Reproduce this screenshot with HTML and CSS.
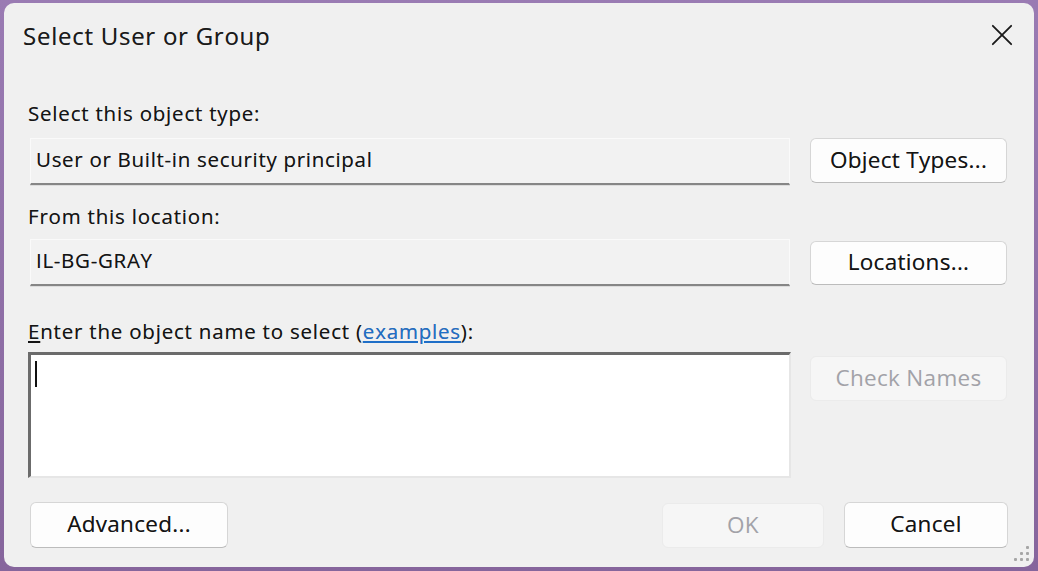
FILE: index.html
```html
<!DOCTYPE html>
<html lang="en">
<head>
<meta charset="utf-8">
<title>Select User or Group</title>
<link rel="stylesheet" href="styles.css">
</head>
<body>
<div class="window">
  <div class="titlebar">
    <span class="title">Select User or Group</span>
    <svg class="close" width="24" height="24" viewBox="0 0 24 24" aria-hidden="true">
      <path d="M2 2 L22 22 M22 2 L2 22" stroke="#1a1a1a" stroke-width="2" fill="none" stroke-linecap="round"/>
    </svg>
  </div>
  <div class="content">
    <div class="label label-first">Select this object type:</div>
    <div class="spacer"></div>
    <div class="field">User or Built-in security principal</div>
    <button class="btn">Object Types...</button>

    <div class="label label-second">From this location:</div>
    <div class="spacer"></div>
    <div class="field field-second">IL-BG-GRAY</div>
    <button class="btn btn-loc">Locations...</button>

    <div class="label label-third"><span class="ul">E</span>nter the object name to select (<a class="link" href="#">examples</a>):</div>
    <div class="spacer"></div>
    <div class="textarea"><span class="caret"></span></div>
    <button class="btn btn-disabled btn-check">Check Names</button>
  </div>
  <div class="footer">
    <button class="btn btn-adv">Advanced...</button>
    <div class="footer-right">
      <button class="btn btn-disabled btn-ok">OK</button>
      <button class="btn btn-cancel">Cancel</button>
    </div>
  </div>
  <div class="grip">
    <i class="d1"></i><i class="d2"></i><i class="d3"></i><i class="d4"></i><i class="d5"></i><i class="d6"></i>
  </div>
</div>
</body>
</html>
```

FILE: styles.css
```css
html, body {
  margin: 0;
  padding: 0;
  height: 100%;
}

body {
  background: linear-gradient(180deg, #9a7bb3 0%, #86659c 100%);
  font-family: "Open Sans", "Noto Sans", "Liberation Sans", sans-serif;
  color: #141414;
  overflow: hidden;
}

.window {
  position: relative;
  box-sizing: border-box;
  margin: 3px 4px 0 4px;
  height: 564px;
  background: #f0f0f0;
  border-radius: 10px;
  display: flex;
  flex-direction: column;
  text-shadow: 0 0 0.6px rgba(0, 0, 0, 0.45);
}

.titlebar {
  height: 70px;
  box-sizing: border-box;
  padding: 19px 20px 0 19px;
  display: flex;
  justify-content: space-between;
  align-items: flex-start;
}

.title {
  font-size: 24px;
  line-height: 28px;
  letter-spacing: 0.75px;
  color: #1a1a1a;
}

.close {
  margin-top: 2px;
  width: 24px;
  height: 22px;
}

.content {
  display: grid;
  grid-template-columns: 760px 197px;
  column-gap: 20px;
  padding: 0 27px 0 26px;
  align-items: start;
}

.label {
  font-size: 20.5px;
  line-height: 22px;
  letter-spacing: 0.8px;
  margin-left: -2px;
}

.label-first { margin-top: 29px; margin-bottom: 14px; }
.label-second { margin-top: 20px; margin-bottom: 12px; }
.label-third { margin-top: 34px; margin-bottom: 10px; }

.spacer { height: 0; }

.field {
  box-sizing: border-box;
  height: 47px;
  padding-left: 5px;
  font-size: 20.5px;
  line-height: 40px;
  letter-spacing: 0.7px;
  background: #f2f2f2;
  border: 1px solid #fafafa;
  border-bottom: 2px solid #868686;
  box-shadow: 0 1px 0 #dcdcdc;
  white-space: nowrap;
}

.btn {
  box-sizing: border-box;
  height: 45px;
  font-family: inherit;
  font-size: 22.5px;
  letter-spacing: 0.3px;
  color: #141414;
  text-shadow: 0 0 0.6px rgba(0, 0, 0, 0.45);
  background: #fdfdfd;
  border: 1px solid #d6d6d6;
  border-bottom-color: #bcbcbc;
  border-radius: 6px;
  padding: 0 0 3px 0;
  cursor: default;
}

.btn-loc {
  margin-top: 2px;
  height: 44px;
}

.btn-disabled {
  background: #f6f6f6;
  border-color: #ebebeb;
  color: #a2a2a8;
  text-shadow: none;
}

.btn-check {
  margin-top: 4px;
}

.link {
  color: #1f6fc8;
  text-decoration: underline;
}

.ul {
  text-decoration: underline;
}

.textarea {
  box-sizing: border-box;
  height: 126px;
  margin-left: -2px;
  width: 763px;
  background: #ffffff;
  border-style: solid;
  border-width: 3px 2px 2px 3px;
  border-color: #6b6b6b #e6e6e6 #e6e6e6 #6b6b6b;
  padding: 6px 0 0 4px;
}

.caret {
  display: block;
  width: 2px;
  height: 26px;
  background: #111;
}

.footer {
  display: flex;
  justify-content: space-between;
  padding: 24px 26px 0 26px;
}

.btn-adv {
  width: 198px;
  height: 46px;
}

.footer-right {
  display: flex;
  gap: 20px;
}

.btn-ok {
  width: 162px;
  height: 45px;
  margin-top: 1px;
}

.btn-cancel {
  width: 164px;
  height: 46px;
}

.grip {
  position: absolute;
  right: 4px;
  bottom: 4px;
  width: 18px;
  height: 18px;
}

.grip i {
  position: absolute;
  width: 3px;
  height: 3px;
  background: #a6a6a6;
  border-radius: 1px;
}

.grip .d1 { right: 1px; top: 1px; }
.grip .d2 { right: 1px; top: 7px; }
.grip .d3 { right: 7px; top: 7px; }
.grip .d4 { right: 1px; top: 13px; }
.grip .d5 { right: 7px; top: 13px; }
.grip .d6 { right: 13px; top: 13px; }
```
